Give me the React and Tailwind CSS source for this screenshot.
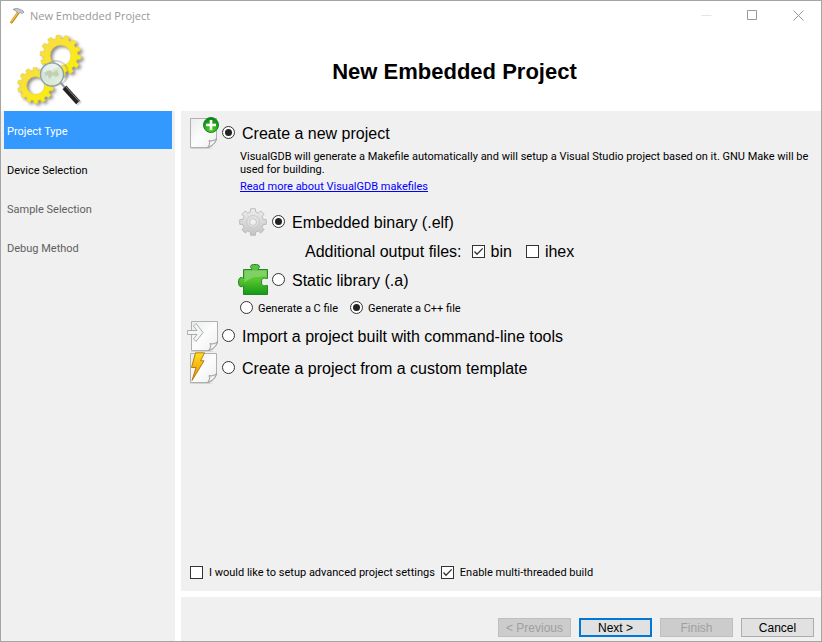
const steps = [
  { name: "Project Type", tone: "bg-[#3399ff] text-white" },
  { name: "Device Selection", tone: "text-black" },
  { name: "Sample Selection", tone: "text-[#606060]" },
  { name: "Debug Method", tone: "text-[#606060]" },
];

function Radio({ name, children, checked, small }) {
  return (
    <label className={small ? "flex items-center gap-[5px] font-['Roboto',sans-serif] text-[11px]" : "flex items-center gap-[7px] text-[16px]"}>
      <input
        type="radio"
        name={name}
        defaultChecked={checked}
        className="mb-0.5 grid size-[13px] shrink-0 appearance-none place-items-center rounded-full border border-[#333] bg-white checked:before:size-[7px] checked:before:rounded-full checked:before:bg-[#222]"
      />
      <span className="pt-0.5">{children}</span>
    </label>
  );
}

function Check({ children, checked, small }) {
  return (
    <label className={small ? "flex items-center gap-1.5 font-['Roboto',sans-serif] text-[11px]" : "flex items-center gap-1.5 text-[16px]"}>
      <span className="grid size-[13px] shrink-0">
        <input
          type="checkbox"
          defaultChecked={checked}
          className="peer col-start-1 row-start-1 size-[13px] appearance-none border border-[#333] bg-white"
        />
        <svg viewBox="0 0 13 13" className="pointer-events-none invisible col-start-1 row-start-1 size-[13px] peer-checked:visible" fill="none" stroke="#333" strokeWidth="1.3">
          <path d="M2.5 6.5 5 9.2 10.7 3.4" />
        </svg>
      </span>
      <span>{children}</span>
    </label>
  );
}

function gearPath(cx, cy, outer, inner, teeth, turn) {
  const pts = [];
  const step = (Math.PI * 2) / teeth;
  for (let i = 0; i < teeth; i++) {
    const a = i * step + turn;
    [[-0.32, inner], [-0.22, outer], [0.22, outer], [0.32, inner]].forEach(([k, r]) => {
      pts.push((cx + Math.cos(a + k * step) * r).toFixed(2) + " " + (cy + Math.sin(a + k * step) * r).toFixed(2));
    });
  }
  return "M" + pts.join("L") + "Z";
}

function circlePath(cx, cy, r) {
  return `M${cx - r} ${cy}a${r} ${r} 0 1 0 ${2 * r} 0a${r} ${r} 0 1 0 ${-2 * r} 0Z`;
}

function HammerIcon() {
  return (
    <svg viewBox="0 0 16 16" className="size-4">
      <path d="M9 5 2.600 14" stroke="#b07c18" strokeWidth="2.800" strokeLinecap="round" />
      <path d="M8.600 5 2.300 13.700" stroke="#f5bd3c" strokeWidth="1.600" strokeLinecap="round" />
      <path d="M4 1.500C6 .2 9 .2 11 1.400l2.400 1 1.500 1.600-1.600 1.600-2-1.200-1.600 1.200-2-1.600C7 2.600 5.600 2 4 1.500Z" fill="#c4c8c8" stroke="#808484" strokeWidth=".7" />
    </svg>
  );
}

function WizardLogo() {
  return (
    <svg viewBox="0 0 76 76" className="size-[76px] overflow-visible">
      <defs>
        <linearGradient id="gold" x1="0" y1="0" x2="1" y2="1">
          <stop offset="0" stopColor="#f4d94c" />
          <stop offset=".5" stopColor="#fbe62c" />
          <stop offset="1" stopColor="#f7f100" />
        </linearGradient>
        <linearGradient id="lens" x1="0" y1="0" x2="1" y2="1">
          <stop offset="0" stopColor="#c6dfe8" />
          <stop offset="1" stopColor="#e8f2d8" />
        </linearGradient>
        <filter id="soft" x="-20%" y="-20%" width="150%" height="150%">
          <feDropShadow dx="2.5" dy="2" stdDeviation="1.6" floodColor="#555" floodOpacity=".65" />
        </filter>
      </defs>
      <g filter="url(#soft)" fillRule="evenodd">
        <path d={gearPath(43.5, 22.5, 20.5, 17, 14, 0.1) + circlePath(43.5, 22.5, 10.5)} fill="url(#gold)" stroke="#e4c91e" strokeWidth=".5" />
        <path d={gearPath(18.5, 52.5, 18, 15, 14, 0.2) + circlePath(18.5, 52.5, 9)} fill="url(#gold)" stroke="#e4c91e" strokeWidth=".5" />
      </g>
      <circle cx="39" cy="40" r="12" fill="none" stroke="#777" strokeOpacity=".3" strokeWidth="2" />
      <path d="M47 54 63 71" stroke="#aaa" strokeWidth="6" opacity=".4" />
      <path d="M43 49 49 56" stroke="#999" strokeWidth="2" />
      <path d="M47.500 54.500 61 69.500" stroke="#222" strokeWidth="5" />
      <path d="M49 54 62.500 69" stroke="#888" strokeWidth="1" />
      <circle cx="35" cy="41.500" r="11.500" fill="url(#lens)" fillOpacity=".95" stroke="#8ba2aa" strokeWidth="1.400" />
      <path d="m29 37 4-1 2 4 5-3 2 5-3 2-3-2-4 4-1-4-3 1Z" fill="#a9a873" opacity=".4" />
      <path d="M26 39a9 9 0 0 1 16-5c-5 1-9 5-16 5Z" fill="#fff" opacity=".5" />
    </svg>
  );
}

function Page({ x }) {
  return (
    <g>
      <ellipse cx={x + 11} cy="31.400" rx="12" ry=".6" fill="#aaa" opacity=".45" />
      <path d={`M${x + 0.5} 1.500h26v20c0 3-5 9-9 9h-17Z`} fill="url(#sheet)" stroke="#b0b0b0" />
      <path d={`M${x + 17.5} 30.500c2-2 2.500-4.500 1.500-7 2.500 1 5.500 0 7.500-2-.5 4-4.500 8-9 9Z`} fill="#e2e2e2" stroke="#8e8e8e" strokeWidth=".8" />
      <path d={`m${x + 20.5} 27.500 3-3`} stroke="#fff" strokeWidth="1.500" />
    </g>
  );
}

function OptionIcon({ kind }) {
  return (
    <svg viewBox="0 0 35 32" className="h-8 w-[35px] shrink-0">
      <defs>
        <linearGradient id="sheet" x1="0" y1="0" x2="1" y2="1">
          <stop offset="0" stopColor="#e9ebea" />
          <stop offset=".5" stopColor="#fcfcfc" />
          <stop offset="1" stopColor="#eee" />
        </linearGradient>
        <radialGradient id="plus" cx=".5" cy=".9" r=".9">
          <stop offset="0" stopColor="#4fd823" />
          <stop offset="1" stopColor="#088118" />
        </radialGradient>
        <linearGradient id="bolt" x1="0" y1="0" x2="0" y2="1">
          <stop offset="0" stopColor="#ffdf20" />
          <stop offset="1" stopColor="#f08b00" />
        </linearGradient>
      </defs>
      {kind === "new" && (
        <>
          <Page x={3} />
          <circle cx="24" cy="8" r="7.500" fill="url(#plus)" stroke="#108522" />
          <path d="M24 3v10M19 8h10" stroke="#fff" strokeWidth="2.600" />
        </>
      )}
      {kind === "import" && (
        <>
          <Page x={4} />
          <path d="M.5 10.500h9.500L6.500 6l2.500-2.500L16 12.500l-7 9L6.500 19l3.500-4.500H.5Z" fill="#f4f5f5" stroke="#999" strokeWidth=".8" />
        </>
      )}
      {kind === "template" && (
        <>
          <Page x={3} />
          <path d="M8.500.8h9l-4 8H17L5 28.500l4-13H4.500Z" fill="url(#bolt)" stroke="#a97509" strokeWidth=".9" />
        </>
      )}
    </svg>
  );
}

function GrayGear() {
  return (
    <svg viewBox="0 0 34 32" className="h-8 w-[34px] shrink-0">
      <defs>
        <linearGradient id="steel" x1="0" y1="0" x2="0" y2="1">
          <stop offset="0" stopColor="#ececec" />
          <stop offset="1" stopColor="#c4c4c4" />
        </linearGradient>
      </defs>
      <path d={gearPath(15, 16, 13.5, 10.5, 8, 0) + circlePath(15, 16, 3.5)} fill="url(#steel)" stroke="#b8b8b8" strokeWidth=".9" strokeLinejoin="round" fillRule="evenodd" />
      <circle cx="15" cy="16" r="6.500" fill="none" stroke="#cdcdcd" />
      <circle cx="15" cy="16" r="4.300" fill="none" stroke="#e6e6e6" />
    </svg>
  );
}

function PuzzleIcon() {
  return (
    <svg viewBox="0 0 34 32" className="h-8 w-[34px] shrink-0">
      <defs>
        <linearGradient id="leaf" x1="0" y1="0" x2="0" y2="1">
          <stop offset="0" stopColor="#62be4e" />
          <stop offset=".5" stopColor="#58c62e" />
          <stop offset="1" stopColor="#149916" />
        </linearGradient>
      </defs>
      <path d="M5.500 5.500h8.500c0-1-1.500-1.500-1.500-3C12.500.8 15 .5 17 .5s4.500.3 4.500 2.300c0 1.200-1.500 1.700-1.500 2.700h9.500v9c-1.500.5-2-.5-3.500-.5-1.500 0-2.500 2-2.500 4s1 4 2.500 4 2-1 3.500-.5V30.500h-24V22c-1 0-1.500.8-2.500.8-1.700 0-2.500-2.300-2.500-4.800s1-4.500 2.500-4.500c1 0 1.500.8 2.500.8Z" fill="url(#leaf)" stroke="#238722" />
      <path d="M6.500 6.500h22v6.500c-8-1-17 0-22 6Z" fill="#fff" opacity=".22" />
    </svg>
  );
}

function WizardButton({ children, look, disabled }) {
  return (
    <button type="button" disabled={disabled} className={"flex h-[19px] w-[73px] items-center justify-center font-['Liberation_Sans',Arial,sans-serif] text-[12px] leading-none " + look}>
      {children}
    </button>
  );
}

export default function App() {
  return (
    <div className="flex min-h-screen flex-col border border-[#a5a5a5] bg-white font-['Liberation_Sans',Arial,sans-serif] text-black">
      <header>
        <div className="flex h-[29px] items-center pl-2">
          <HammerIcon />
          <span className="ml-[5px] flex-1 pt-0.5 font-['Open_Sans',sans-serif] text-[11px] text-[#999]">New Embedded Project</span>
          <div className="flex text-[#999]">
            <button type="button" aria-label="Minimize" disabled className="grid w-[46px] place-items-center text-[#e5e5e5]">
              <svg viewBox="0 0 11 11" className="size-[11px]" stroke="currentColor"><path d="M.5 5.500h10" /></svg>
            </button>
            <button type="button" aria-label="Maximize" className="grid w-[46px] place-items-center">
              <svg viewBox="0 0 11 11" className="size-[11px]" fill="none" stroke="currentColor"><path d="M.5.5h9v9h-9Z" /></svg>
            </button>
            <button type="button" aria-label="Close" className="grid w-[46px] place-items-center">
              <svg viewBox="0 0 11 11" className="size-[11px]" stroke="currentColor"><path d="m.5.5 10 10M10.500.5l-10 10" /></svg>
            </button>
          </div>
        </div>
        <div className="flex h-[81px] items-center pl-4 pr-[5px]">
          <WizardLogo />
          <h1 className="flex-1 pt-0.5 text-center text-[22px] font-bold">New Embedded Project</h1>
        </div>
      </header>

      <div className="flex flex-1 gap-1.5">
        <nav className="w-[174px] shrink-0 bg-[#f0f0f0] pl-[3px] pr-[3px]">
          <ul className="flex flex-col gap-px">
            {steps.map((s) => (
              <li key={s.name} className={"flex h-[38px] items-center px-[3px] pt-1 font-['Roboto',sans-serif] text-[11px] " + s.tone}>{s.name}</li>
            ))}
          </ul>
        </nav>

        <div className="flex min-w-0 flex-1 flex-col gap-1.5">
          <main className="flex flex-1 flex-col bg-[#f0f0f0] pl-1.5 pt-[5px]">
            <div className="flex h-[34px] items-center">
              <OptionIcon kind="new" />
              <Radio name="project" checked>Create a new project</Radio>
            </div>

            <div className="pl-[53px] font-['Roboto',sans-serif]">
              <p className="pr-1 text-[11px] leading-[13px]">
                VisualGDB will generate a Makefile automatically and will setup a Visual Studio project based on it. GNU Make will be used for building.
              </p>
              <a href="#makefiles" className="mt-1 block w-fit text-[11px] leading-[13px] text-[#0000ff] underline">Read more about VisualGDB makefiles</a>
            </div>

            <div className="mt-3 flex flex-col pl-[51px]">
              <div className="flex h-[34px] items-center">
                <GrayGear />
                <Radio name="output" checked>Embedded binary (.elf)</Radio>
              </div>
              <div className="flex h-[25px] items-center pl-[67px] text-[16px]">
                <span className="mr-2.5">Additional output files:</span>
                <div className="flex gap-3.5">
                  <Check checked>bin</Check>
                  <Check>ihex</Check>
                </div>
              </div>
              <div className="flex h-8 items-center">
                <PuzzleIcon />
                <Radio name="output">Static library (.a)</Radio>
              </div>
              <div className="flex h-6 items-center gap-3 pl-0.5">
                <Radio name="language" small>Generate a C file</Radio>
                <Radio name="language" small checked>Generate a C++ file</Radio>
              </div>
            </div>

            <div className="flex h-8 items-center">
              <OptionIcon kind="import" />
              <Radio name="project">Import a project built with command-line tools</Radio>
            </div>
            <div className="flex h-8 items-center">
              <OptionIcon kind="template" />
              <Radio name="project">Create a project from a custom template</Radio>
            </div>

            <div className="mt-auto flex gap-1.5 pb-2.5 pl-[3px]">
              <Check small>I would like to setup advanced project settings</Check>
              <Check small checked>Enable multi-threaded build</Check>
            </div>
          </main>

          <footer className="flex h-11 items-end justify-end gap-2 bg-[#f0f0f0] pb-1 pr-[7px]">
            <WizardButton disabled look="border border-[#bfbfbf] bg-[#cccccc] text-[#a0a0a0]">&lt; Previous</WizardButton>
            <WizardButton look="border-2 border-[#0078d7] bg-[#e1e1e1]">Next &gt;</WizardButton>
            <WizardButton disabled look="border border-[#bfbfbf] bg-[#cccccc] text-[#a0a0a0]">Finish</WizardButton>
            <WizardButton look="border border-[#adadad] bg-[#e1e1e1]">Cancel</WizardButton>
          </footer>
        </div>
      </div>
    </div>
  );
}
